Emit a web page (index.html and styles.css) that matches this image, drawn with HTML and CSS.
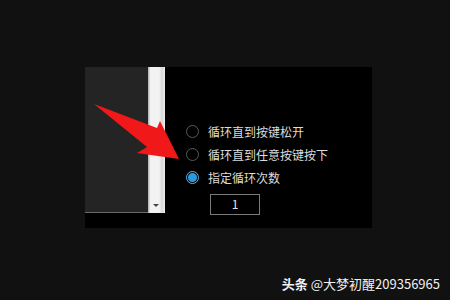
FILE: index.html
```html
<!DOCTYPE html>
<html lang="zh-CN">
<head>
<meta charset="UTF-8">
<title>循环设置</title>
<link rel="stylesheet" href="styles.css">
</head>
<body>

<div class="panel">
    <div class="list-box">
        <div class="list"></div>
        <div class="scrollbar"><span class="scroll-arrow"></span></div>
    </div>
    <div class="options">
        <label class="option"><span class="radio"></span>循环直到按键松开</label>
        <label class="option"><span class="radio"></span>循环直到任意按键按下</label>
        <label class="option"><span class="radio checked"></span>指定循环次数</label>
        <div class="count">1</div>
    </div>
    <svg class="arrow" width="100" height="70" viewBox="0 0 100 70">
        <polygon points="9,9 72,33 75,26 94,64 52,58 62,52" fill="#f01818"/>
    </svg>
</div>

<div class="watermark"><b>头条</b> @大梦初醒209356965</div>

</body>
</html>
```

FILE: styles.css
```css
body {
    margin: 0;
    background-color: #111111;
    font-family: "Noto Sans CJK SC", "Noto Sans", sans-serif;
    width: 450px;
    height: 300px;
    overflow: hidden;
}
.panel {
    position: relative;
    margin: 67px 0 0 85px;
    width: 287px;
    height: 161px;
    background-color: #000000;
    display: flex;
}
.list-box {
    display: flex;
    height: 146px;
}
.list {
    width: 63px;
    background-color: #242424;
    border-bottom: 1px solid #6a6a6a;
}
.scrollbar {
    position: relative;
    width: 17px;
    background: linear-gradient(to right, #bdbdbd 0, #bdbdbd 1px, #f2f2f2 2px, #f2f2f2 11px, #d8d8d8 14px, #ededed 17px);
}
.scroll-arrow {
    position: absolute;
    left: 5px;
    bottom: 6px;
    border-left: 3px solid transparent;
    border-right: 3px solid transparent;
    border-top: 3px solid #444444;
}
.options {
    padding: 53px 0 0 21px;
    display: flex;
    flex-direction: column;
}
.option {
    display: flex;
    align-items: center;
    height: 23px;
    color: #dcdcdc;
    font-size: 12px;
}
.radio {
    width: 11px;
    height: 11px;
    border: 1px solid #5a5a5a;
    border-radius: 50%;
    margin-right: 9px;
    box-sizing: content-box;
}
.radio.checked {
    border-color: #5fb8f0;
    background: radial-gradient(circle, #2a9be0 0, #2a9be0 4px, #000 5px);
}
.count {
    margin: 5px 0 0 24px;
    width: 48px;
    height: 19px;
    border: 1px solid #7a7a7a;
    color: #e0e0e0;
    font-size: 12px;
    line-height: 17px;
    text-align: center;
}
.arrow {
    position: absolute;
    top: 28px;
    left: 0;
}
.watermark {
    margin: 48px 10px 0 0;
    text-align: right;
    color: #f2f2f2;
    font-size: 13px;
    line-height: 16px;
}
.watermark b {
    font-weight: bold;
}
```
